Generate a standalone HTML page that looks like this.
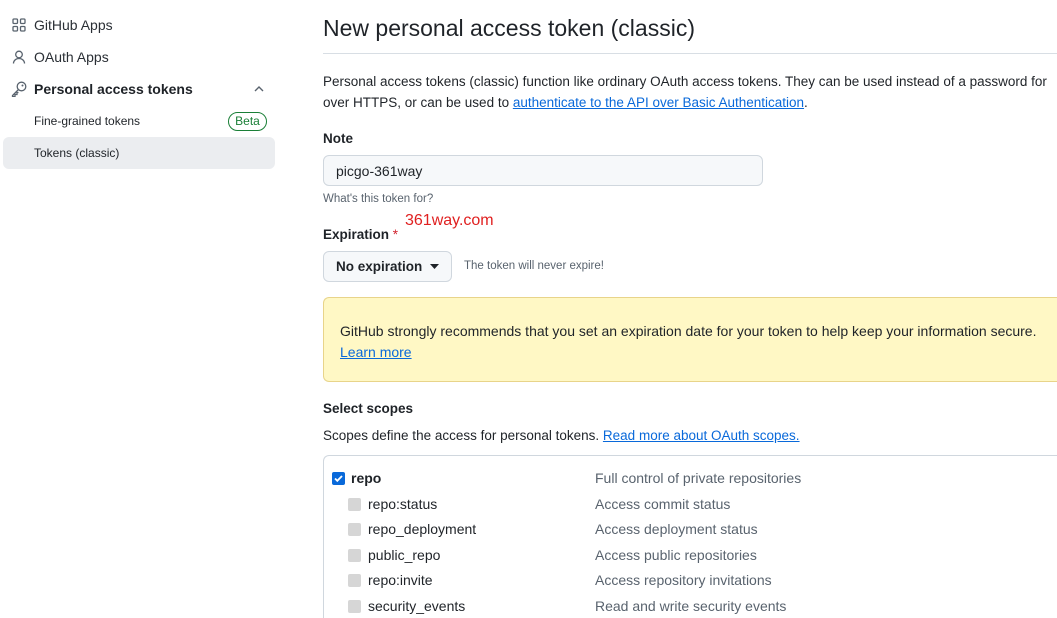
<!DOCTYPE html>
<html><head><meta charset="utf-8"><style>
*{margin:0;padding:0;box-sizing:border-box}
html,body{width:1057px;height:618px;overflow:hidden}
body{background:#fff;font-family:"Liberation Sans",sans-serif;color:#1f2328;position:relative;font-size:14px}
.a{position:absolute;white-space:nowrap}
a{color:#0969da;text-decoration:underline}
.cb{position:absolute;width:13px;height:13px;border-radius:2px;background:#d6d6d6}
.cb svg{position:absolute;left:1px;top:1px}
.sd{position:absolute;left:595px;color:#59636e;font-size:14px;white-space:nowrap}
.sn{position:absolute;left:368px;font-size:14px;white-space:nowrap}
</style></head><body>
<svg class="a" style="left:12px;top:18px" width="14" height="14" viewBox="0 0 14 14" fill="none" stroke="#59636e" stroke-width="1.3"><rect x="1" y="1" width="4.5" height="4.5" rx="1"/><rect x="8.5" y="1" width="4.5" height="4.5" rx="1"/><rect x="1" y="8.5" width="4.5" height="4.5" rx="1"/><rect x="8.5" y="8.5" width="4.5" height="4.5" rx="1"/></svg>
<div class="a" style="left:34px;top:17px;font-size:14px;color:#2a2f35">GitHub Apps</div>
<svg class="a" style="left:12px;top:50px" width="14" height="14" viewBox="0 0 14 14" fill="none" stroke="#59636e" stroke-width="1.3"><circle cx="7" cy="4.5" r="3.3"/><path d="M1.5 13.5c0-3 2.5-5 5.5-5s5.5 2 5.5 5"/></svg>
<div class="a" style="left:34px;top:49px;color:#2a2f35">OAuth Apps</div>
<svg class="a" style="left:11px;top:81px" width="16" height="16" viewBox="0 0 16 16" fill="none" stroke="#59636e" stroke-width="1.3"><circle cx="10.5" cy="5.5" r="4.3"/><circle cx="11.5" cy="4.5" r="1" fill="#59636e" stroke="none"/><path d="M7.5 8.5L1.5 14.5v1h2.5v-2h2v-2h1.5"/></svg>
<div class="a" style="left:34px;top:81px;font-weight:bold">Personal access tokens</div>
<svg class="a" style="left:253px;top:84px" width="12" height="10" viewBox="0 0 12 10" fill="none" stroke="#59636e" stroke-width="1.4"><path d="M2 7l4-4 4 4"/></svg>
<div class="a" style="left:34px;top:114px;font-size:12px">Fine-grained tokens</div>
<div class="a" style="left:228px;top:112px;width:39px;height:19px;border:1px solid #1a7f37;border-radius:10px;color:#1a7f37;font-size:12px;text-align:center;line-height:17px">Beta</div>
<div class="a" style="left:3px;top:137px;width:272px;height:32px;background:#ebedf0;border-radius:6px"></div>
<div class="a" style="left:34px;top:146px;font-size:12px">Tokens (classic)</div>
<div class="a" style="left:323px;top:15px;font-size:23px">New personal access token (classic)</div>
<div class="a" style="left:323px;top:53px;width:734px;height:1px;background:#d8dee4"></div>
<div class="a" style="left:323px;top:74px;font-size:13.5px">Personal access tokens (classic) function like ordinary OAuth access tokens. They can be used instead of a password for</div>
<div class="a" style="left:323px;top:95px;font-size:13.5px">over HTTPS, or can be used to <a>authenticate to the API over Basic Authentication</a>.</div>
<div class="a" style="left:323px;top:131px;font-weight:bold;font-size:13.5px">Note</div>
<div class="a" style="left:323px;top:155px;width:440px;height:31px;background:#f6f8fa;border:1px solid #d0d7de;border-radius:6px"></div>
<div class="a" style="left:336px;top:163px;font-size:14px">picgo-361way</div>
<div class="a" style="left:323px;top:193px;font-size:11.5px;color:#59636e">What's this token for?</div>
<div class="a" style="left:405px;top:212px;font-size:16px;color:#e02020">361way.com</div>
<div class="a" style="left:323px;top:227px;font-weight:bold;font-size:13.5px">Expiration <span style="color:#d1242f;font-weight:normal">*</span></div>
<div class="a" style="left:323px;top:251px;width:129px;height:31px;background:#f6f8fa;border:1px solid #d0d7de;border-radius:6px"></div>
<div class="a" style="left:336px;top:259px;font-weight:bold;font-size:13.5px">No expiration</div>
<svg class="a" style="left:430px;top:264px" width="10" height="6"><path d="M0 0h9l-4.5 5z" fill="#1f2328"/></svg>
<div class="a" style="left:464px;top:260px;font-size:11.5px;color:#59636e">The token will never expire!</div>
<div class="a" style="left:323px;top:297px;width:734px;height:85px;background:#fff8c5;border:1px solid #e8d48a;border-right:none;border-radius:6px 0 0 6px"></div>
<div class="a" style="left:340px;top:323px;font-size:14px">GitHub strongly recommends that you set an expiration date for your token to help keep your information secure.</div>
<div class="a" style="left:340px;top:344px;font-size:14px"><a>Learn more</a></div>
<div class="a" style="left:323px;top:401px;font-weight:bold;font-size:13.5px">Select scopes</div>
<div class="a" style="left:323px;top:428px;font-size:13.5px">Scopes define the access for personal tokens. <a>Read more about OAuth scopes.</a></div>
<div class="a" style="left:323px;top:455px;width:734px;height:163px;border:1px solid #d0d7de;border-right:none;border-bottom:none;border-radius:6px 0 0 0"></div>
<div class="cb" style="left:332px;top:472px;background:#0969da"><svg width="11" height="11" viewBox="0 0 11 11"><path d="M2 5.5l2.3 2.3L9 3" stroke="#fff" stroke-width="1.8" fill="none"/></svg></div>
<div class="a" style="left:351px;top:470px;font-weight:bold">repo</div>
<div class="sd" style="top:470px">Full control of private repositories</div>
<div class="cb" style="left:348px;top:498px"></div><div class="sn" style="top:496px">repo:status</div><div class="sd" style="top:496px">Access commit status</div>
<div class="cb" style="left:348px;top:523px"></div><div class="sn" style="top:521px">repo_deployment</div><div class="sd" style="top:521px">Access deployment status</div>
<div class="cb" style="left:348px;top:549px"></div><div class="sn" style="top:547px">public_repo</div><div class="sd" style="top:547px">Access public repositories</div>
<div class="cb" style="left:348px;top:574px"></div><div class="sn" style="top:572px">repo:invite</div><div class="sd" style="top:572px">Access repository invitations</div>
<div class="cb" style="left:348px;top:600px"></div><div class="sn" style="top:598px">security_events</div><div class="sd" style="top:598px">Read and write security events</div>
</body></html>
